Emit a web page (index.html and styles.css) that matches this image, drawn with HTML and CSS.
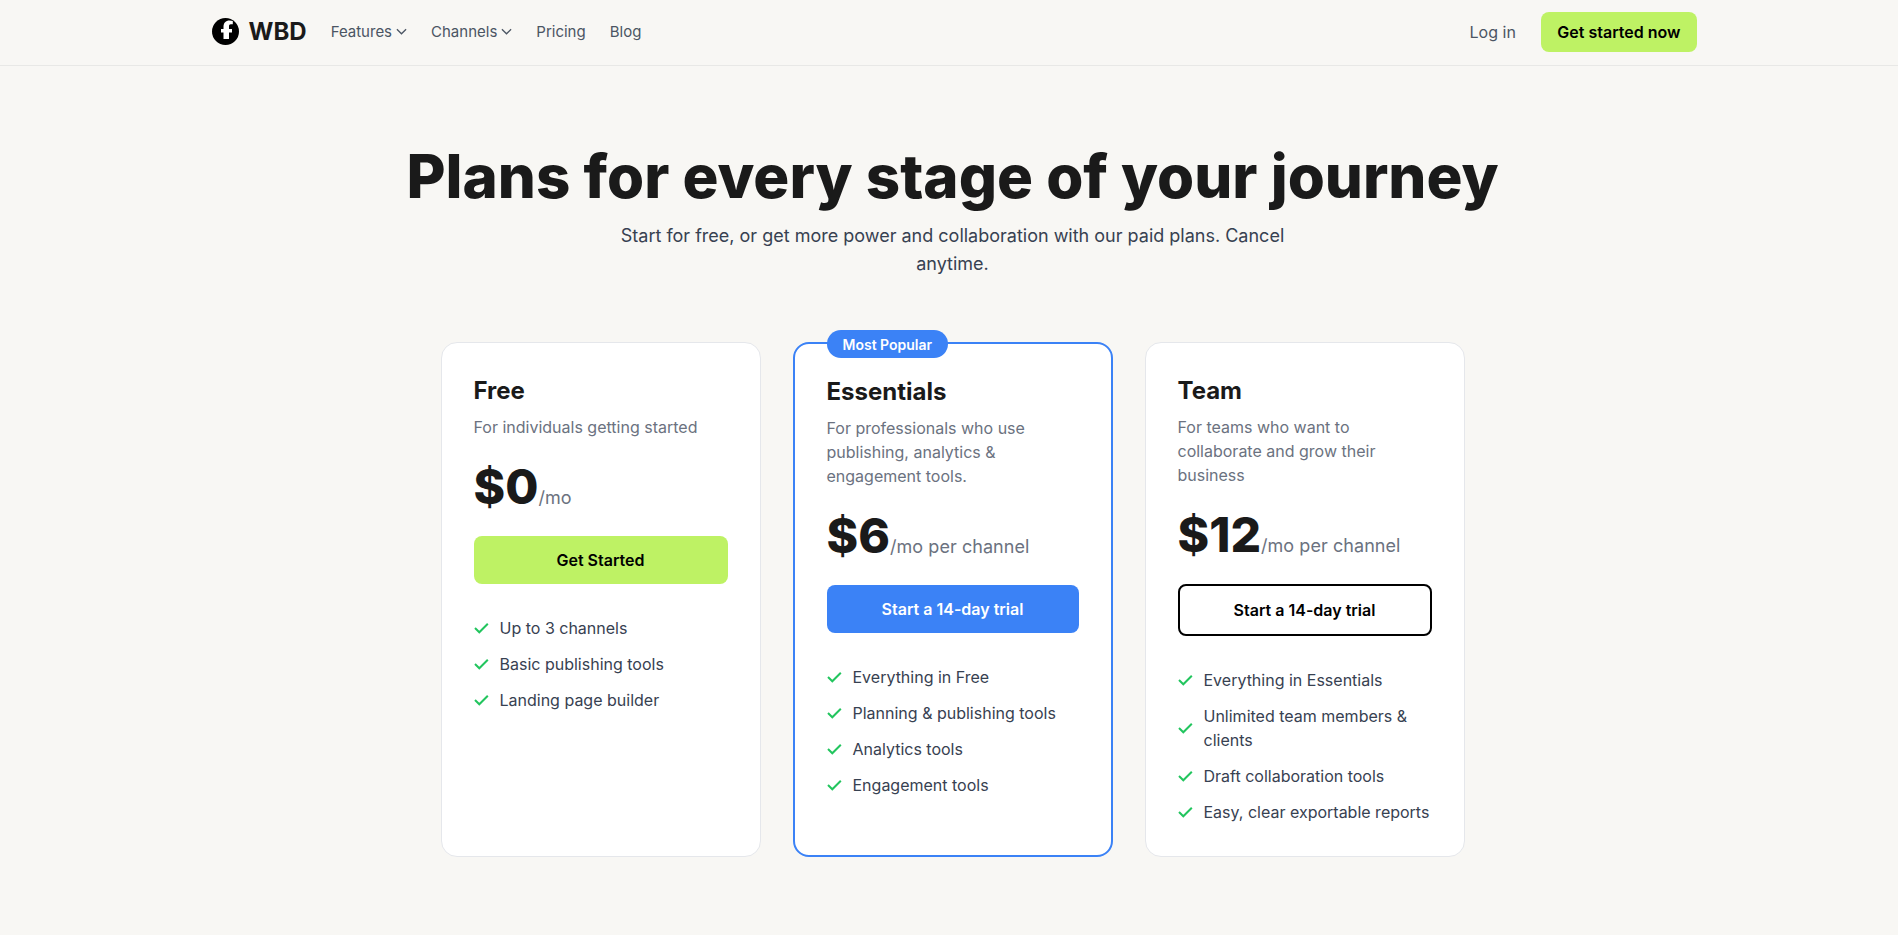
FILE: index.html
```html
<!DOCTYPE html>
<html lang="en">
<head>
<meta charset="utf-8">
<title>WBD Pricing</title>
<link rel="stylesheet" href="styles.css">
</head>
<body>
<header class="topbar">
  <div class="topbar-inner">
    <div class="left">
      <a class="brand" href="#">
        <svg class="brand-mark" viewBox="0 0 27 27" aria-hidden="true"><circle cx="13.5" cy="13.5" r="13.5" fill="#000"/><path d="M11.5 21V14.500H9V11H11.500V8.800C11.500 4.800 13.800 2.500 17.500 2.500C18.800 2.500 20 2.700 20.800 3V6.200H18.800C17.500 6.200 17 7 17 8.300V11H20V14.500H17V21Z" fill="#fff"/></svg>
        <span>WBD</span>
      </a>
      <nav class="links">
        <a href="#">Features <svg class="chev" viewBox="0 0 12 12" aria-hidden="true"><path d="M1 3.500L6 8.500 11 3.500"/></svg></a>
        <a href="#">Channels <svg class="chev" viewBox="0 0 12 12" aria-hidden="true"><path d="M1 3.500L6 8.500 11 3.500"/></svg></a>
        <a href="#">Pricing</a>
        <a href="#">Blog</a>
      </nav>
    </div>
    <div class="right">
      <a class="login" href="#">Log in</a>
      <a class="cta" href="#">Get started now</a>
    </div>
  </div>
</header>
<main class="page">
  <section class="hero">
    <h1>Plans for every stage of your journey</h1>
    <p>Start for free, or get more power and collaboration with our paid plans. Cancel anytime.</p>
  </section>
  <section class="plans">
    <article class="plan">
      <h2>Free</h2>
      <p class="desc">For individuals getting started</p>
      <div class="price"><strong>$0</strong><span>/mo</span></div>
      <a class="btn btn-lime" href="#">Get Started</a>
      <ul>
        <li><svg class="tick" viewBox="0 0 16 16"><path d="M1 8l4.300 4.300L13.800 3.700"/></svg>Up to 3 channels</li>
        <li><svg class="tick" viewBox="0 0 16 16"><path d="M1 8l4.300 4.300L13.800 3.700"/></svg>Basic publishing tools</li>
        <li><svg class="tick" viewBox="0 0 16 16"><path d="M1 8l4.300 4.300L13.800 3.700"/></svg>Landing page builder</li>
      </ul>
    </article>
    <article class="plan plan-featured">
      <div class="badge">Most Popular</div>
      <h2>Essentials</h2>
      <p class="desc">For professionals who use publishing, analytics &amp; engagement tools.</p>
      <div class="price"><strong>$6</strong><span>/mo per channel</span></div>
      <a class="btn btn-blue" href="#">Start a 14-day trial</a>
      <ul>
        <li><svg class="tick" viewBox="0 0 16 16"><path d="M1 8l4.300 4.300L13.800 3.700"/></svg>Everything in Free</li>
        <li><svg class="tick" viewBox="0 0 16 16"><path d="M1 8l4.300 4.300L13.800 3.700"/></svg>Planning &amp; publishing tools</li>
        <li><svg class="tick" viewBox="0 0 16 16"><path d="M1 8l4.300 4.300L13.800 3.700"/></svg>Analytics tools</li>
        <li><svg class="tick" viewBox="0 0 16 16"><path d="M1 8l4.300 4.300L13.800 3.700"/></svg>Engagement tools</li>
      </ul>
    </article>
    <article class="plan">
      <h2>Team</h2>
      <p class="desc">For teams who want to collaborate and grow their business</p>
      <div class="price"><strong>$12</strong><span>/mo per channel</span></div>
      <a class="btn btn-outline" href="#">Start a 14-day trial</a>
      <ul>
        <li><svg class="tick" viewBox="0 0 16 16"><path d="M1 8l4.300 4.300L13.800 3.700"/></svg>Everything in Essentials</li>
        <li><svg class="tick" viewBox="0 0 16 16"><path d="M1 8l4.300 4.300L13.800 3.700"/></svg>Unlimited team members &amp; clients</li>
        <li><svg class="tick" viewBox="0 0 16 16"><path d="M1 8l4.300 4.300L13.800 3.700"/></svg>Draft collaboration tools</li>
        <li><svg class="tick" viewBox="0 0 16 16"><path d="M1 8l4.300 4.300L13.800 3.700"/></svg>Easy, clear exportable reports</li>
      </ul>
    </article>
  </section>
</main>
</body>
</html>
```
FILE: styles.css
```css
* { box-sizing: border-box; }
html, body { margin: 0; }
body {
  background: #f8f7f4;
  color: #1a1a1a;
  font-family: Inter, "Liberation Sans", sans-serif;
  overflow: hidden;
  height: 935px;
}
a { text-decoration: none; color: inherit; }
.topbar { height: 66px; border-bottom: 1px solid #e8e8e6; padding-bottom: 2px; }
.topbar-inner {
  width: 1485.5px;
  height: 63px;
  margin-left: 211.5px;
  display: flex;
  align-items: center;
  justify-content: space-between;
}
.left, .right, .brand, .links, .links a { display: flex; align-items: center; }
.brand { gap: 10px; font-size: 24px; font-weight: 700; }
.brand-mark { width: 27px; height: 27px; }
.links { margin-left: 24px; gap: 24px; font-size: 15px; color: #4b5563; }
.links a { gap: 4px; }
.chev { width: 11px; height: 11px; fill: none; stroke: #4b5563; stroke-width: 1.4; }
.right { gap: 25px; }
.login { font-size: 16px; color: #4b5563; }
.cta {
  height: 40px;
  padding: 0 16.5px;
  display: flex;
  align-items: center;
  background: #bef264;
  color: #000;
  border-radius: 8px;
  font-size: 16px;
  font-weight: 600;
}
.page { margin-left: 440.5px; width: 1024px; }
.hero { display: flex; flex-direction: column; align-items: center; text-align: center; padding-top: 80px; }
.hero h1 { margin: 0; font-size: 60px; line-height: 60px; font-weight: 800; white-space: nowrap; }
.hero p {
  margin: 16px 0 0;
  width: 672px;
  font-size: 18px;
  line-height: 28px;
  color: #374151;
}
.plans {
  margin-top: 64px;
  display: grid;
  grid-template-columns: repeat(3, 320px);
  gap: 32px;
}
.plan {
  position: relative;
  height: 515px;
  padding: 32px;
  background: #fff;
  border: 1px solid #e5e7eb;
  border-radius: 16px;
}
.plan-featured { border: 2px solid #3b82f6; }
.badge {
  position: absolute;
  top: -14px;
  left: 32px;
  height: 28px;
  padding: 0 16px;
  display: flex;
  align-items: center;
  background: #3b82f6;
  color: #fff;
  font-size: 14px;
  font-weight: 600;
  border-radius: 14px;
}
.plan h2 { margin: 0; font-size: 24px; line-height: 32px; font-weight: 700; }
.desc { margin: 8px 0 0; font-size: 16px; line-height: 24px; color: #6b7280; }
.price { margin-top: 24px; display: flex; align-items: baseline; }
.price strong { font-size: 48px; line-height: 48px; font-weight: 800; }
.price span { font-size: 18px; letter-spacing: 0.06px; color: #6b7280; }
.btn {
  margin-top: 25px;
  height: 48px;
  display: flex;
  align-items: center;
  justify-content: center;
  border-radius: 8px;
  font-size: 16px;
  font-weight: 600;
}
.btn-lime { background: #bef264; color: #000; }
.btn-blue { background: #3b82f6; color: #fff; }
.btn-outline { height: 52px; border: 2px solid #000; color: #000; }
.plan ul { margin: 32px 0 0; padding: 0; list-style: none; display: grid; gap: 12px; }
.plan li { display: flex; align-items: center; gap: 10px; font-size: 16px; line-height: 24px; color: #374151; }
.tick { width: 16px; height: 16px; flex: none; fill: none; stroke: #22c55e; stroke-width: 2; }
```
